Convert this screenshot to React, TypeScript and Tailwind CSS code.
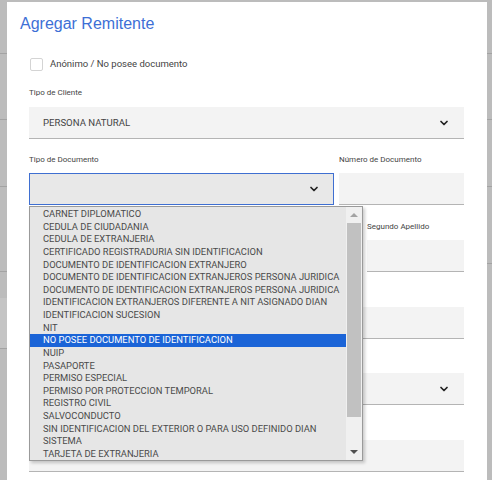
import { ChevronDown } from 'lucide-react'

const tiposDocumento = [
  'CARNET DIPLOMATICO',
  'CEDULA DE CIUDADANIA',
  'CEDULA DE EXTRANJERIA',
  'CERTIFICADO REGISTRADURIA SIN IDENTIFICACION',
  'DOCUMENTO DE IDENTIFICACION EXTRANJERO',
  'DOCUMENTO DE IDENTIFICACION EXTRANJEROS PERSONA JURIDICA',
  'DOCUMENTO DE IDENTIFICACION EXTRANJEROS PERSONA JURIDICA',
  'IDENTIFICACION EXTRANJEROS DIFERENTE A NIT ASIGNADO DIAN',
  'IDENTIFICACION SUCESION',
  'NIT',
  'NO POSEE DOCUMENTO DE IDENTIFICACION',
  'NUIP',
  'PASAPORTE',
  'PERMISO ESPECIAL',
  'PERMISO POR PROTECCION TEMPORAL',
  'REGISTRO CIVIL',
  'SALVOCONDUCTO',
  'SIN IDENTIFICACION DEL EXTERIOR O PARA USO DEFINIDO DIAN',
  'SISTEMA',
  'TARJETA DE EXTRANJERIA',
]

function Label({ children }: { children?: React.ReactNode }) {
  return <div className="h-3 text-[8px] leading-3 text-[#444]">{children}</div>
}

function Field({ className = '' }: { className?: string }) {
  return <div className={`h-8 border-b border-[#b4b4b4] bg-[#f3f3f3] ${className}`} />
}

function SelectField({ value }: { value?: string }) {
  return (
    <div className="flex h-8 items-center justify-between border-b border-[#b4b4b4] bg-[#f3f3f3] pr-[14px] pl-[14px]">
      <span className="text-[9.6px] text-[#444]">{value}</span>
      <ChevronDown className="h-3 w-3 text-[#222]" strokeWidth={3.5} />
    </div>
  )
}

function Backdrop({ side }: { side: 'left' | 'right' }) {
  const w = side === 'left' ? 'w-[7px]' : 'w-[5px]'
  return (
    <div className={`${w} flex shrink-0 flex-col bg-[#bcbcbc]`}>
      <div className="h-[52px] border-b border-[#a3a3a3]" />
      <div className="h-[66px] border-b border-[#a3a3a3]" />
      <div className="h-[67px] border-b border-[#a3a3a3]" />
      {side === 'left' ? (
        <>
          <div className="h-[85px] border-b border-[#a3a3a3]" />
          <div className="h-[26px]" />
          <div className="h-[51px] border-b border-[#a3a3a3] bg-[#c4c4c4]" />
        </>
      ) : (
        <div className="h-[77px] border-b border-[#a3a3a3]" />
      )}
    </div>
  )
}

export default function App() {
  return (
    <div
      className="flex h-[480px] w-[492px] overflow-hidden bg-[#bcbcbc] pt-[2px]"
      style={{ fontFamily: 'Roboto, "Noto Sans", sans-serif' }}
    >
      <Backdrop side="left" />
      <div className="relative flex-1 bg-white">
        <h1 className="mt-[10px] ml-[13px] font-['Liberation_Sans',sans-serif] text-[16px] leading-6 text-[#3d6fd6]">
          Agregar Remitente
        </h1>

        <div className="ml-[22px] w-[435px]">
          <label className="mt-[21px] flex items-center gap-[7px]">
            <span className="ml-px h-[13px] w-[13px] rounded-[2px] border border-[#d4d4d4] bg-white" />
            <span className="text-[9.5px] text-[#444]">Anónimo / No posee documento</span>
          </label>

          <div className="mt-[16px]">
            <Label>Tipo de Cliente</Label>
            <div className="mt-[8px]">
              <SelectField value="PERSONA NATURAL" />
            </div>
          </div>

          <div className="mt-[15px] flex gap-[5px]">
            <div className="w-[305px]">
              <Label>Tipo de Documento</Label>
              <div className="mt-[7px] flex h-8 items-center justify-end border border-[#3f6fd1] bg-[#e8e8e8] pr-[13px]">
                <ChevronDown className="h-3 w-3 text-[#222]" strokeWidth={3.5} />
              </div>
            </div>
            <div className="flex-1">
              <Label>Número de Documento</Label>
              <Field className="mt-[7px]" />
            </div>
          </div>

          <div className="mt-[16px] flex gap-[5px]">
            <div className="flex-1">
              <Label />
              <Field className="mt-[7px]" />
            </div>
            <div className="flex-1">
              <Label />
              <Field className="mt-[7px]" />
            </div>
            <div className="flex-1">
              <Label />
              <Field className="mt-[7px]" />
            </div>
            <div className="w-[97px]">
              <Label>Segundo Apellido</Label>
              <Field className="mt-[7px]" />
            </div>
          </div>

          <div className="mt-[16px]">
            <Label />
            <Field className="mt-[7px]" />
          </div>

          <div className="mt-[15px]">
            <Label />
            <div className="mt-[7px]">
              <SelectField />
            </div>
          </div>

          <div className="mt-[16px]">
            <Label />
            <Field className="mt-[7px]" />
          </div>
        </div>

        <div className="absolute top-[204px] left-[22px] flex h-[255px] w-[334px] border border-[#9a9a9a] bg-[#e6e6e6] shadow-[2px_2px_3px_rgba(0,0,0,0.2)]">
          <ul className="min-w-0 flex-1 pt-px">
            {tiposDocumento.map((t, i) => (
              <li
                key={i}
                className={`h-[12.63px] pl-[13px] text-[9.4px] leading-[12.63px] whitespace-nowrap ${
                  i === 10 ? 'bg-[#1b64d7] text-white' : 'text-[#4a4a4a]'
                }`}
              >
                {t}
              </li>
            ))}
          </ul>
          <div className="flex w-[16px] shrink-0 flex-col items-center bg-[#f0f0f0]">
            <div className="flex h-[16px] items-center justify-center">
              <div className="h-0 w-0 border-x-[4px] border-b-[4px] border-x-transparent border-b-[#a3a3a3]" />
            </div>
            <div className="h-[194px] w-[14px] bg-[#c1c1c1]" />
            <div className="flex-1" />
            <div className="flex h-[16px] items-center justify-center">
              <div className="h-0 w-0 border-x-[4px] border-t-[4px] border-x-transparent border-t-[#505050]" />
            </div>
          </div>
        </div>
      </div>
      <Backdrop side="right" />
    </div>
  )
}
